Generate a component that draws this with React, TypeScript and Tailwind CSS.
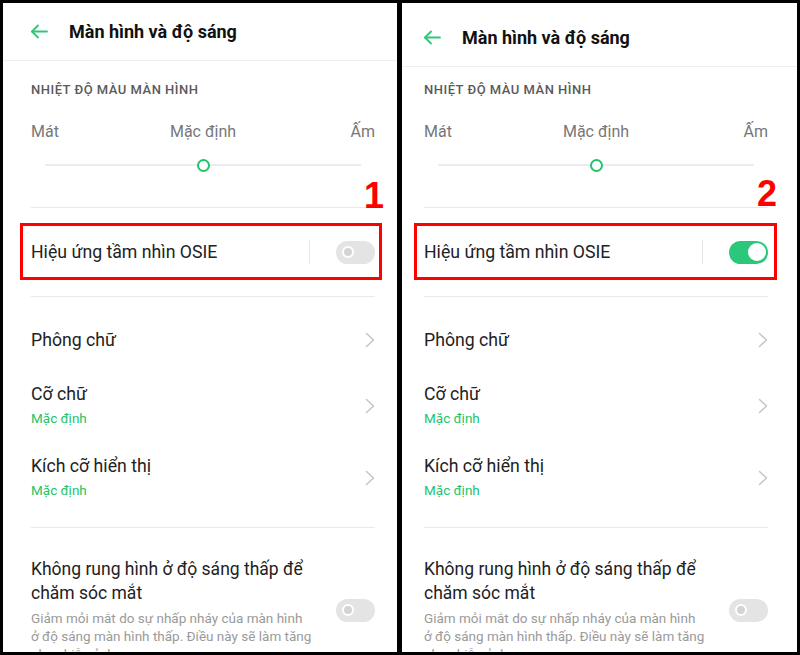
import React from 'react'

const GREEN = 'text-[#22c36b]'

function BackArrow() {
  return (
    <svg width="18" height="15" viewBox="0 0 18 15" fill="none" stroke="#2bc77b" strokeWidth="1.8" strokeLinecap="round" strokeLinejoin="round">
      <path d="M17 7.5H2" />
      <path d="M8 1.5L2 7.5l6 6" />
    </svg>
  )
}

function Chevron() {
  return (
    <svg width="10" height="16" viewBox="0 0 10 16" fill="none" stroke="#c4c4c4" strokeWidth="1.5" strokeLinecap="round" strokeLinejoin="round">
      <path d="M1.5 1.5L8.5 8l-7 6.5" />
    </svg>
  )
}

function Toggle({ on }: { on: boolean }) {
  if (on) {
    return (
      <div className="w-[39px] h-[23px] shrink-0 rounded-full bg-[#2bc77b] flex items-center justify-end pr-[2px]">
        <div className="w-[18px] h-[18px] rounded-full bg-white" />
      </div>
    )
  }
  return (
    <div className="w-[39px] h-[23px] shrink-0 rounded-full bg-[#e4e4e4] flex items-center pl-[6px]">
      <div className="w-[12px] h-[12px] rounded-full border-[2.5px] border-white bg-[#d4d4d4]" />
    </div>
  )
}

function Divider() {
  return <div className="h-px bg-[#e9e9e9]" />
}

function LinkRow({ title, sub, className = '' }: { title: string; sub?: string; className?: string }) {
  return (
    <div className={`flex items-center justify-between ${className}`}>
      <div>
        <div className="text-[17.7px] leading-[24px] text-[#222]">{title}</div>
        {sub && <div className={`text-[13.5px] leading-[24px] ${GREEN}`}>{sub}</div>}
      </div>
      <Chevron />
    </div>
  )
}

function Panel({ second }: { second: boolean }) {
  return (
    <div className={`${second ? 'w-[395px]' : 'w-[394px]'} h-[649px] shrink-0 bg-white overflow-hidden`}>
      {/* header */}
      <div
        className={`${second ? 'h-[64px] pt-[6px] pl-[21px]' : 'h-[58px] pl-[27px]'} flex items-center border-b border-[#efefef]`}
      >
        <BackArrow />
        <span className="ml-[21px] text-[18px] font-bold text-[#111]">Màn hình và độ sáng</span>
      </div>

      <div className={second ? 'pl-[22px] pt-[15px]' : 'pl-[28px] pt-[21px]'}>
        <div className="w-[344px]">
          <div className="h-[16px] leading-[16px] text-[13px] font-medium tracking-[0.5px] text-[#5a5a5a]">
            NHIỆT ĐỘ MÀU MÀN HÌNH
          </div>

          <div className="mt-[24px] grid grid-cols-3 h-[20px] leading-[20px] text-[16px] text-[#777]">
            <span>Mát</span>
            <span className="text-center">Mặc định</span>
            <span className="text-right">Ấm</span>
          </div>

          {/* slider */}
          <div className="relative mt-[11px] h-[24px] flex items-center px-[14px]">
            <div className="h-[2px] w-full bg-[#ececec]" />
            <div className="absolute left-[165.5px] top-[5.5px] w-[13px] h-[13px] rounded-full border-2 border-[#22c36b] bg-white" />
          </div>

          <div className="relative h-[30px]">
            <span
              className={`absolute right-[-9px] ${second ? 'top-[-1px]' : 'top-[1px]'} text-[36px] leading-none font-bold text-[#ff0000] font-['Liberation_Sans',Arial,sans-serif]`}
            >
              {second ? '2' : '1'}
            </span>
          </div>
          <Divider />

          {/* OSIE */}
          <div className="relative h-[88px] flex items-center">
            <div
              className={`absolute ${second ? 'left-[-10px] w-[363px]' : 'left-[-11px] w-[362px]'} top-[15px] h-[57px] border-[3px] border-[#ff0000]`}
            />
            <span className="flex-1 text-[17.7px] text-[#222]">Hiệu ứng tầm nhìn OSIE</span>
            <div className="w-px h-[24px] bg-[#e8e8e8] mr-[26px]" />
            <Toggle on={second} />
          </div>
          <Divider />

          <div className="pt-[31px] pb-[25px]">
            <LinkRow title="Phông chữ" />
            <LinkRow title="Cỡ chữ" sub="Mặc định" className="mt-[30px]" />
            <LinkRow title="Kích cỡ hiển thị" sub="Mặc định" className="mt-[24px]" />
          </div>
          <Divider />

          <div className="pt-[29px] flex items-center">
            <div className="flex-1 whitespace-nowrap">
              <div className="text-[17.5px] leading-[24px] text-[#222]">
                Không rung hình ở độ sáng thấp để
                <br />
                chăm sóc mắt
              </div>
              <div className="mt-[4px] text-[13.5px] leading-[18px] text-[#9a9a9a]">
                Giảm mỏi mắt do sự nhấp nháy của màn hình
                <br />
                ở độ sáng màn hình thấp. Điều này sẽ làm tăng
                <br />
                nhẹ nhiễu ảnh.
              </div>
            </div>
            <Toggle on={false} />
          </div>
        </div>
      </div>
    </div>
  )
}

export default function App() {
  return (
    <div className="w-[800px] h-[655px] bg-black flex gap-[5px] pt-[3px] pl-[3px] overflow-hidden font-[Roboto,'Noto_Sans',sans-serif]">
      <Panel second={false} />
      <Panel second={true} />
    </div>
  )
}
